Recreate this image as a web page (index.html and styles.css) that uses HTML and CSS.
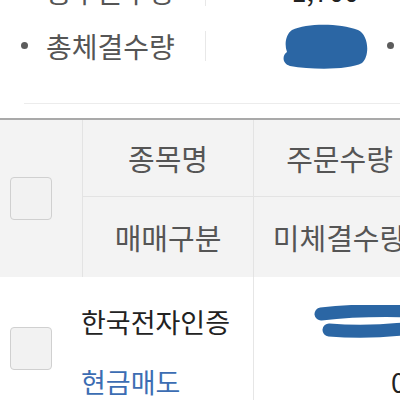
FILE: index.html
```html
<!DOCTYPE html>
<html lang="ko">
<head>
  <meta charset="UTF-8" />
  <meta name="viewport" content="width=device-width, initial-scale=1" />
  <title>미체결 주문</title>
  <link rel="stylesheet" href="styles.css">
</head>
<body>

  <div class="page">
    <ul class="summary">
      <li class="summary-row">
        <div class="item">
          <span class="bullet"></span>
          <span class="label">총주문수량</span>
          <span class="sep"></span>
          <span class="value">1,700</span>
        </div>
        <div class="item">
          <span class="bullet"></span>
          <span class="label">총주문금액</span>
        </div>
      </li>
      <li class="summary-row">
        <div class="item">
          <span class="bullet"></span>
          <span class="label">총체결수량</span>
          <span class="sep"></span>
          <span class="value">
            <svg class="blob" width="88" height="46" viewBox="0 0 88 46">
              <path d="M11 7 C 26 0, 58 0, 77 7 C 88 12, 89 33, 81 40 C 68 47, 32 47, 9 43 C 1 41, 1 32, 6 29 C 3 21, 5 11, 11 7 Z" fill="#2b66a4"/>
            </svg>
          </span>
        </div>
        <div class="item">
          <span class="bullet"></span>
          <span class="label">총체결금액</span>
        </div>
      </li>
    </ul>

    <div class="orders">
      <div class="thead">
        <div class="th th-check"><span class="checkbox"></span></div>
        <div class="th th-top">종목명</div>
        <div class="th th-top">주문수량</div>
        <div class="th">매매구분</div>
        <div class="th">미체결수량</div>
      </div>

      <div class="trow">
        <div class="td-check"><span class="checkbox"></span></div>
        <div class="td-name">
          <div class="line">한국전자인증</div>
          <div class="line sell">현금매도</div>
        </div>
        <div class="td-qty">
          <div class="line">
            <svg class="scribble" width="96" height="34" viewBox="0 0 96 34">
              <path d="M8 9 C 34 6, 64 5, 98 6" stroke="#2b66a4" stroke-width="13" stroke-linecap="round" fill="none"/>
              <path d="M16 25 C 42 27, 74 26, 98 23" stroke="#2b66a4" stroke-width="13" stroke-linecap="round" fill="none"/>
              <path d="M22 17 L 96 16.5" stroke="#fff" stroke-width="1.5" stroke-dasharray="9 5" fill="none"/>
            </svg>
          </div>
          <div class="line">0</div>
        </div>
      </div>
    </div>
  </div>

</body>
</html>
```

FILE: styles.css
```css
body {
  margin: 0;
  width: 400px;
  height: 400px;
  overflow: hidden;
  background: #fff;
  font-family: "Noto Sans CJK KR", "Noto Sans", sans-serif;
  color: #222;
}
.page {
  width: 760px;
}
.summary {
  list-style: none;
  margin: -37px 0 0 24px;
  padding: 0 0 30px;
  border-bottom: 1px solid #ececec;
}
.summary-row {
  display: flex;
  height: 55px;
  align-items: center;
  white-space: nowrap;
}
.item {
  display: flex;
  align-items: center;
  flex: none;
  width: 366px;
  margin-left: -3px;
  margin-right: 3px;
}
.bullet {
  width: 7px;
  height: 7px;
  border-radius: 50%;
  background: #5c5c5c;
  margin-right: 18px;
  flex: none;
}
.label {
  width: 159px;
  font-size: 28px;
  color: #555;
}
.sep {
  width: 1px;
  height: 30px;
  background: #e8e8e8;
}
.value {
  flex: 1;
  display: flex;
  justify-content: flex-end;
  align-items: center;
  padding-right: 28px;
  font-size: 27px;
  color: #222;
}
.blob {
  display: block;
  margin-right: -10px;
}

.orders {
  margin-top: 14px;
  border-top: 2px solid #a9a9a9;
}
.thead {
  display: grid;
  grid-template-columns: 82px 171px 172px;
  grid-template-rows: 77px 80px;
  background: #f3f3f3;
}
.th {
  display: flex;
  align-items: center;
  justify-content: center;
  border-left: 1px solid #e3e3e3;
  font-size: 29px;
  color: #555;
}
.th-top {
  border-bottom: 1px solid #e3e3e3;
}
.th-check {
  grid-row: span 2;
  border-left: none;
  justify-content: flex-start;
  padding-left: 10px;
}
.checkbox {
  display: block;
  width: 40px;
  height: 41px;
  border: 1.5px solid #d0d0d0;
  border-radius: 4px;
  background: #f2f2f2;
}

.trow {
  display: grid;
  grid-template-columns: 82px 171px 172px;
  height: 143px;
}
.td-check {
  display: flex;
  align-items: center;
  padding-left: 10px;
}
.td-name,
.td-qty {
  padding-top: 27px;
  font-size: 27px;
}
.td-name {
  margin-left: -1px;
}
.td-qty {
  border-left: 1px solid #e6e6e6;
  text-align: right;
  padding-right: 19px;
}
.line {
  height: 36px;
  line-height: 36px;
  display: flex;
  align-items: center;
}
.line + .line {
  margin-top: 24px;
}
.td-qty .line {
  justify-content: flex-end;
}
.sell {
  color: #3c6db3;
}
.scribble {
  display: block;
  margin-right: -3px;
}
```
